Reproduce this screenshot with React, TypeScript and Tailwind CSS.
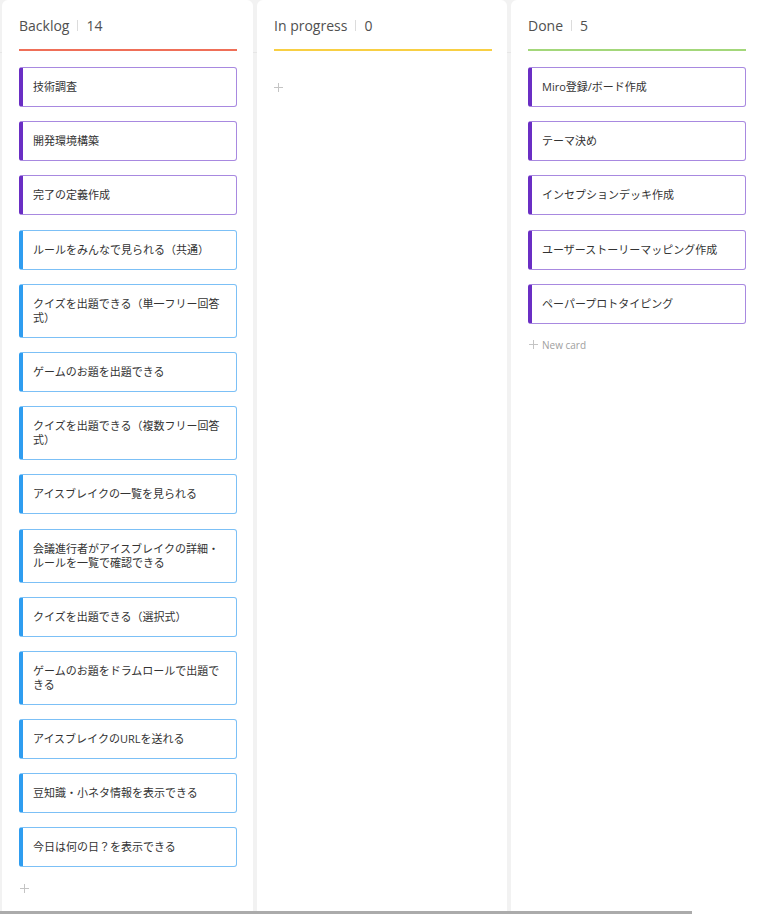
import React from "react";

type Card = { text: string; kind: "purple" | "blue" };

const backlog: Card[] = [
  { text: "技術調査", kind: "purple" },
  { text: "開発環境構築", kind: "purple" },
  { text: "完了の定義作成", kind: "purple" },
  { text: "ルールをみんなで見られる（共通）", kind: "blue" },
  { text: "クイズを出題できる（単一フリー回答式）", kind: "blue" },
  { text: "ゲームのお題を出題できる", kind: "blue" },
  { text: "クイズを出題できる（複数フリー回答式）", kind: "blue" },
  { text: "アイスブレイクの一覧を見られる", kind: "blue" },
  { text: "会議進行者がアイスブレイクの詳細・ルールを一覧で確認できる", kind: "blue" },
  { text: "クイズを出題できる（選択式）", kind: "blue" },
  { text: "ゲームのお題をドラムロールで出題できる", kind: "blue" },
  { text: "アイスブレイクのURLを送れる", kind: "blue" },
  { text: "豆知識・小ネタ情報を表示できる", kind: "blue" },
  { text: "今日は何の日？を表示できる", kind: "blue" },
];

const done: Card[] = [
  { text: "Miro登録/ボード作成", kind: "purple" },
  { text: "テーマ決め", kind: "purple" },
  { text: "インセプションデッキ作成", kind: "purple" },
  { text: "ユーザーストーリーマッピング作成", kind: "purple" },
  { text: "ペーパープロトタイピング", kind: "purple" },
];

function PlusIcon() {
  return (
    <svg width="9" height="9" viewBox="0 0 9 9" className="block">
      <path d="M4.5 0v9M0 4.5h9" stroke="#c4c4c4" strokeWidth="1" />
    </svg>
  );
}

function CardView({ card }: { card: Card }) {
  const cls =
    card.kind === "purple"
      ? "border-[#a889e0] border-l-[#6a2ec4]"
      : "border-[#7cc0f6] border-l-[#2f9df0]";
  return (
    <div
      className={`rounded-[3px] border border-l-[4px] bg-white pl-[10px] pr-[12px] py-[12px] text-[11px] leading-[14px] text-[#333333] ${cls}`}
    >
      {card.text}
    </div>
  );
}

function Column({
  title,
  count,
  lineColor,
  children,
  wide,
}: {
  title: string;
  count: number;
  lineColor: string;
  children: React.ReactNode;
  wide?: boolean;
}) {
  return (
    <div
      className={`shrink-0 rounded-t-[6px] bg-white pl-[17px] pr-[16px] pt-[15px] ${
        wide ? "w-[251px]" : "w-[250px]"
      }`}
    >
      <div className="flex h-[20px] items-center text-[14px] text-[#505050]">
        <span>{title}</span>
        <span className="mx-[8px] h-[11px] w-px bg-[#dcdcdc]" />
        <span>{count}</span>
      </div>
      <div className={`mt-[14px] h-[2px] w-[218px] ${lineColor}`} />
      {children}
    </div>
  );
}

export default function App() {
  return (
    <div
      className="relative h-[914px] w-[757px] overflow-hidden bg-[#f2f2f2]"
      style={{ fontFamily: '"Open Sans","Noto Sans CJK JP",sans-serif' }}
    >
      <div className="absolute left-0 right-0 top-[52px] h-px bg-[#e6e6e6]" />
      <div className="relative flex h-full gap-[4px] pl-[2px]">
        <Column title="Backlog" count={14} lineColor="bg-[#ef6f58]" wide>
          <div className="mt-[16px] flex w-[218px] flex-col gap-[14.2px]">
            {backlog.map((c) => (
              <CardView key={c.text} card={c} />
            ))}
          </div>
          <div className="mt-[17px] pl-[1px]">
            <PlusIcon />
          </div>
        </Column>
        <Column title="In progress" count={0} lineColor="bg-[#f8cf43]">
          <div className="mt-[32px] pl-0">
            <PlusIcon />
          </div>
        </Column>
        <Column title="Done" count={5} lineColor="bg-[#a3d77a]" wide>
          <div className="mt-[16px] flex w-[218px] flex-col gap-[14.2px]">
            {done.map((c) => (
              <CardView key={c.text} card={c} />
            ))}
          </div>
          <div className="mt-[14px] flex items-center gap-[4px] pl-[1px] text-[10px] leading-[14px] text-[#a0a0a0]">
            <PlusIcon />
            <span>New card</span>
          </div>
        </Column>
      </div>
      <div className="absolute bottom-0 left-0 h-[3px] w-[692px] bg-[#ababab]" />
    </div>
  );
}
